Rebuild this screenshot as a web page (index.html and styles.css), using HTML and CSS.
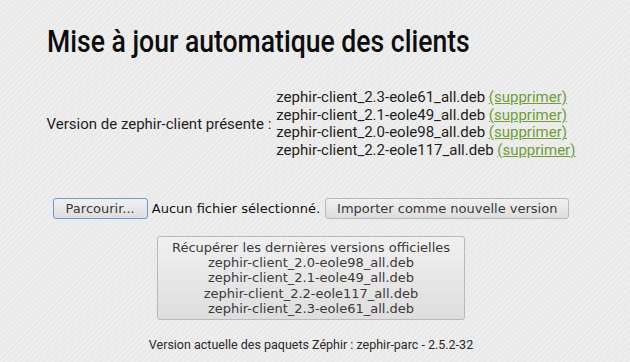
FILE: index.html
```html
<!DOCTYPE html>
<html lang="fr">
<head>
<meta charset="utf-8">
<title>Mise à jour automatique des clients</title>
<link rel="stylesheet" href="styles.css">
</head>
<body>
<div class="page">
  <h1 class="title">Mise à jour automatique des clients</h1>

  <div class="versions">
    <div class="versions-label">Version de zephir-client présente :</div>
    <ul class="versions-list">
      <li>zephir-client_2.3-eole61_all.deb <a href="#">(supprimer)</a></li>
      <li>zephir-client_2.1-eole49_all.deb <a href="#">(supprimer)</a></li>
      <li>zephir-client_2.0-eole98_all.deb <a href="#">(supprimer)</a></li>
      <li>zephir-client_2.2-eole117_all.deb <a href="#">(supprimer)</a></li>
    </ul>
  </div>

  <form class="upload">
    <span class="file">
      <button type="button" class="btn btn-focus">Parcourir...</button>
      <span class="file-name">Aucun fichier sélectionné.</span>
    </span>
    <button type="button" class="btn">Importer comme nouvelle version</button>
  </form>

  <div class="fetch-wrap">
    <button type="button" class="btn btn-fetch">Récupérer les dernières versions officielles<br>zephir-client_2.0-eole98_all.deb<br>zephir-client_2.1-eole49_all.deb<br>zephir-client_2.2-eole117_all.deb<br>zephir-client_2.3-eole61_all.deb</button>
  </div>

  <p class="footer">Version actuelle des paquets Zéphir : zephir-parc - 2.5.2-32</p>
</div>
</body>
</html>
```

FILE: styles.css
```css
html, body {
  margin: 0;
  padding: 0;
}

body {
  width: 630px;
  height: 362px;
  overflow: hidden;
  background-color: #ececec;
  background-image: repeating-linear-gradient(-45deg, #eeeeee 0 2px, #e9e9e9 2px 4px);
  font-family: Roboto, "Liberation Sans", sans-serif;
  color: #1e1e1e;
}

.page {
  width: 622px;
  display: flex;
  flex-direction: column;
  align-items: center;
}

.title {
  align-self: flex-start;
  margin: 23px 0 0 47px;
  font-family: Roboto, sans-serif;
  font-size: 32px;
  line-height: 36px;
  font-weight: 500;
  color: #0c0c0c;
  transform: scaleX(0.83);
  transform-origin: left center;
}

.versions {
  margin-top: 30px;
  display: flex;
  align-items: center;
  gap: 5px;
  font-size: 15px;
}

.versions-label {
  letter-spacing: 0;
}

.versions-list {
  list-style: none;
  margin: 0;
  padding: 0;
}

.versions-list li {
  line-height: 17.7px;
}

.versions-list a {
  color: #6f9e35;
  text-decoration: underline;
}

.upload {
  margin: 38px 0 0 0;
  display: flex;
  align-items: center;
  gap: 5px;
}

.file {
  display: flex;
  align-items: center;
  gap: 4px;
}

.file-name {
  font-family: "DejaVu Sans", sans-serif;
  font-size: 13px;
  color: #111;
}

.btn {
  font-family: "DejaVu Sans", sans-serif;
  font-size: 13px;
  color: #3a3a3a;
  height: 21px;
  padding: 0 11px;
  border: 1px solid #b9b9b9;
  border-radius: 3px;
  background: linear-gradient(#f0f0f0, #dedede);
}

.btn-focus {
  border-color: #6a9bd6;
  padding: 0 12px;
}

.fetch-wrap {
  margin-top: 17px;
}

.btn-fetch {
  height: auto;
  width: 308px;
  padding: 3px 4px;
  line-height: 15.25px;
  font-size: 13px;
  text-align: center;
}

.footer {
  margin: 17px 0 0 0;
  font-size: 12.5px;
  color: #2a2a2a;
}
```
